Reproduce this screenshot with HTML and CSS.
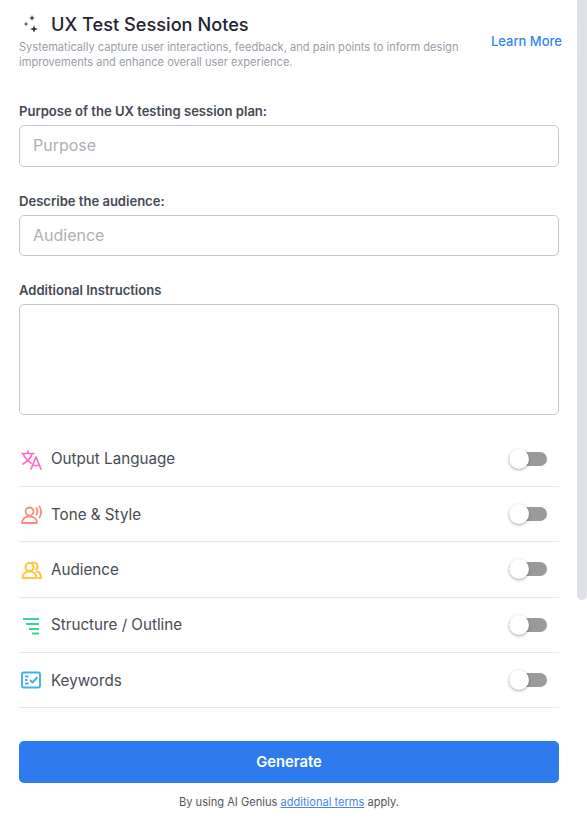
FILE: index.html
```html
<!DOCTYPE html>
<html lang="en">
<head>
<meta charset="utf-8">
<title>UX Test Session Notes</title>
<link rel="stylesheet" href="styles.css">
</head>
<body>
<div class="scrollbar"></div>
<main class="panel">
  <header class="head">
    <div class="head-main">
      <h1 class="title">
        <svg class="spark" viewBox="0 0 18 18" width="18" height="18" fill="#2a3040"><path d="M9 1l.8 2.200L12 4l-2.200.8L9 7l-.8-2.200L6 4l2.200-.8z"/><path d="M3 7.500l.6 1.900 1.900.6-1.900.6L3 12.500l-.6-1.900L.5 10l1.900-.6z"/><path d="M11 11l1 3 3 1-3 1-1 3-1-3-3-1 3-1z"/></svg>
        <span>UX Test Session Notes</span>
      </h1>
      <p class="desc">Systematically capture user interactions, feedback, and pain points to inform design improvements and enhance overall user experience.</p>
    </div>
    <a class="learn" href="#">Learn More</a>
  </header>

  <label class="field">
    <span class="label">Purpose of the UX testing session plan:</span>
    <input class="input" type="text" placeholder="Purpose">
  </label>
  <label class="field">
    <span class="label">Describe the audience:</span>
    <input class="input" type="text" placeholder="Audience">
  </label>
  <label class="field">
    <span class="label">Additional Instructions</span>
    <textarea class="input area"></textarea>
  </label>

  <ul class="options">
    <li class="option">
      <svg class="icon" viewBox="0 0 22 22" width="22" height="22" fill="none" stroke="#ff6cc8" stroke-width="1.700" stroke-linecap="round" stroke-linejoin="round"><path d="M2 5.500h12M8 3v2.500M3.500 6.500c1.500 3.500 4 6.500 7.500 8.500M12 6c-1 3.500-4 7-9 10"/><path d="M11 21l5-12 5 12M13 17.500h6"/></svg>
      <span class="opt-name">Output Language</span>
      <span class="toggle"></span>
    </li>
    <li class="option">
      <svg class="icon" viewBox="0 0 22 22" width="22" height="22" fill="none" stroke="#ff8a80" stroke-width="1.800" stroke-linecap="round" stroke-linejoin="round"><circle cx="9.500" cy="8.500" r="4"/><path d="M2 20c0-4.200 3.300-6.500 7.500-6.500S17 15.800 17 20z"/><path d="M16.500 5c1.200 2 1.200 4.500 0 6.500M19.500 3.500c2.100 3 2.100 8 0 11"/></svg>
      <span class="opt-name">Tone &amp; Style</span>
      <span class="toggle"></span>
    </li>
    <li class="option">
      <svg class="icon" viewBox="0 0 22 22" width="22" height="22" fill="none" stroke="#ffc53d" stroke-width="2" stroke-linecap="round" stroke-linejoin="round"><circle cx="9.500" cy="9" r="4"/><path d="M11.500 5.300a3.800 3.800 0 1 1 4.500 6.200"/><path d="M2.500 20c0-4 3-6.500 7-6.500s7 2.500 7 6.500z"/><path d="M17 13.500c2.500.8 4 3 4 6.500h-2.500"/></svg>
      <span class="opt-name">Audience</span>
      <span class="toggle"></span>
    </li>
    <li class="option">
      <svg class="icon" viewBox="0 0 22 22" width="22" height="22" fill="none" stroke="#3ad68f" stroke-width="1.800"><path d="M3 5h16M6 10h13M9 15h10M12 19.500h7"/></svg>
      <span class="opt-name">Structure / Outline</span>
      <span class="toggle"></span>
    </li>
    <li class="option">
      <svg class="icon" viewBox="0 0 22 22" width="22" height="22" fill="none" stroke="#3fb2ea" stroke-width="1.900" stroke-linejoin="round"><rect x="2" y="3.500" width="18" height="15" rx="1.500"/><path d="M5 7.500h3.500M5 11h2.500M5 14.500h3.500"/><path d="M10.500 11.500l2 2 4.500-5" stroke-linecap="round"/></svg>
      <span class="opt-name">Keywords</span>
      <span class="toggle"></span>
    </li>
  </ul>

  <button class="generate" type="button">Generate</button>
  <p class="terms">By using AI Genius <a href="#">additional terms</a> apply.</p>
</main>
</body>
</html>
```

FILE: styles.css
```css
* { box-sizing: border-box; }
html, body { height: 100%; }
body {
  margin: 0;
  background: #fff;
  overflow: hidden;
  font-family: Inter, "Liberation Sans", sans-serif;
  color: #3f4450;
}
.scrollbar {
  position: absolute;
  top: 0;
  right: 0;
  width: 10px;
  height: 600px;
  background: #e0e1e6;
  border-radius: 0 0 5px 5px;
}
.panel {
  width: 577px;
  padding: 13px 18px 0 19px;
}
.head {
  display: flex;
  justify-content: space-between;
  align-items: flex-start;
  gap: 16px;
  margin-bottom: 31px;
}
.head-main { width: 450px; }
.title {
  display: flex;
  align-items: center;
  gap: 10px;
  margin: 0 0 5px 4px;
  font-size: 18.200px;
  line-height: 22px;
  font-weight: 500;
  color: #1f2430;
}
.spark { flex: none; margin-top: -2px; }
.desc {
  margin: 0;
  font-size: 11.080px;
  line-height: 15px;
  color: #9a9ea8;
}
.learn {
  margin: 20px -3px 0 0;
  font-size: 13px;
  line-height: 16px;
  font-weight: 500;
  color: #3585f0;
  text-decoration: none;
  white-space: nowrap;
}
.field {
  display: block;
  margin-bottom: 24px;
}
.label {
  display: block;
  margin-bottom: 4px;
  font-size: 13.050px;
  line-height: 20px;
  font-weight: 600;
  color: #454a55;
}
.input {
  display: block;
  width: 100%;
  height: 41.700px;
  padding: 0 13px 2px;
  border: 1px solid #c8c9cc;
  border-radius: 5px;
  background: #fff;
  font-family: inherit;
  font-size: 16px;
  color: #3f4450;
  outline: none;
}
.input::placeholder { color: #adb0b6; opacity: 1; }
.area {
  height: 111px;
  resize: none;
}
.options {
  list-style: none;
  margin: -7.700px 0 0;
  padding: 0;
}
.option {
  display: flex;
  align-items: center;
  height: 55.300px;
  border-bottom: 1px solid #e7e8ea;
}
.icon { flex: none; margin: 0 9px 0 1px; }
.opt-name {
  flex: 1;
  font-size: 15.200px;
  color: #474b55;
}
.toggle {
  position: relative;
  width: 38px;
  height: 14px;
  margin-right: 12px;
  border-radius: 7px;
  background: #9a9a9a;
}
.toggle::before {
  content: "";
  position: absolute;
  left: 0;
  top: -3px;
  width: 20px;
  height: 20px;
  border-radius: 50%;
  background: #fff;
  box-shadow: 0 1px 3px rgba(0, 0, 0, .35);
}
.generate {
  display: block;
  width: 100%;
  height: 42px;
  margin-top: 32.700px;
  border: 0;
  border-radius: 5px;
  background: #2e7bed;
  color: #fff;
  font-family: inherit;
  font-size: 14.800px;
  font-weight: 600;
}
.terms {
  margin: 11px 0 0;
  text-align: center;
  font-size: 11.100px;
  line-height: 16px;
  color: #555;
}
.terms a { color: #4d86ea; }
```
